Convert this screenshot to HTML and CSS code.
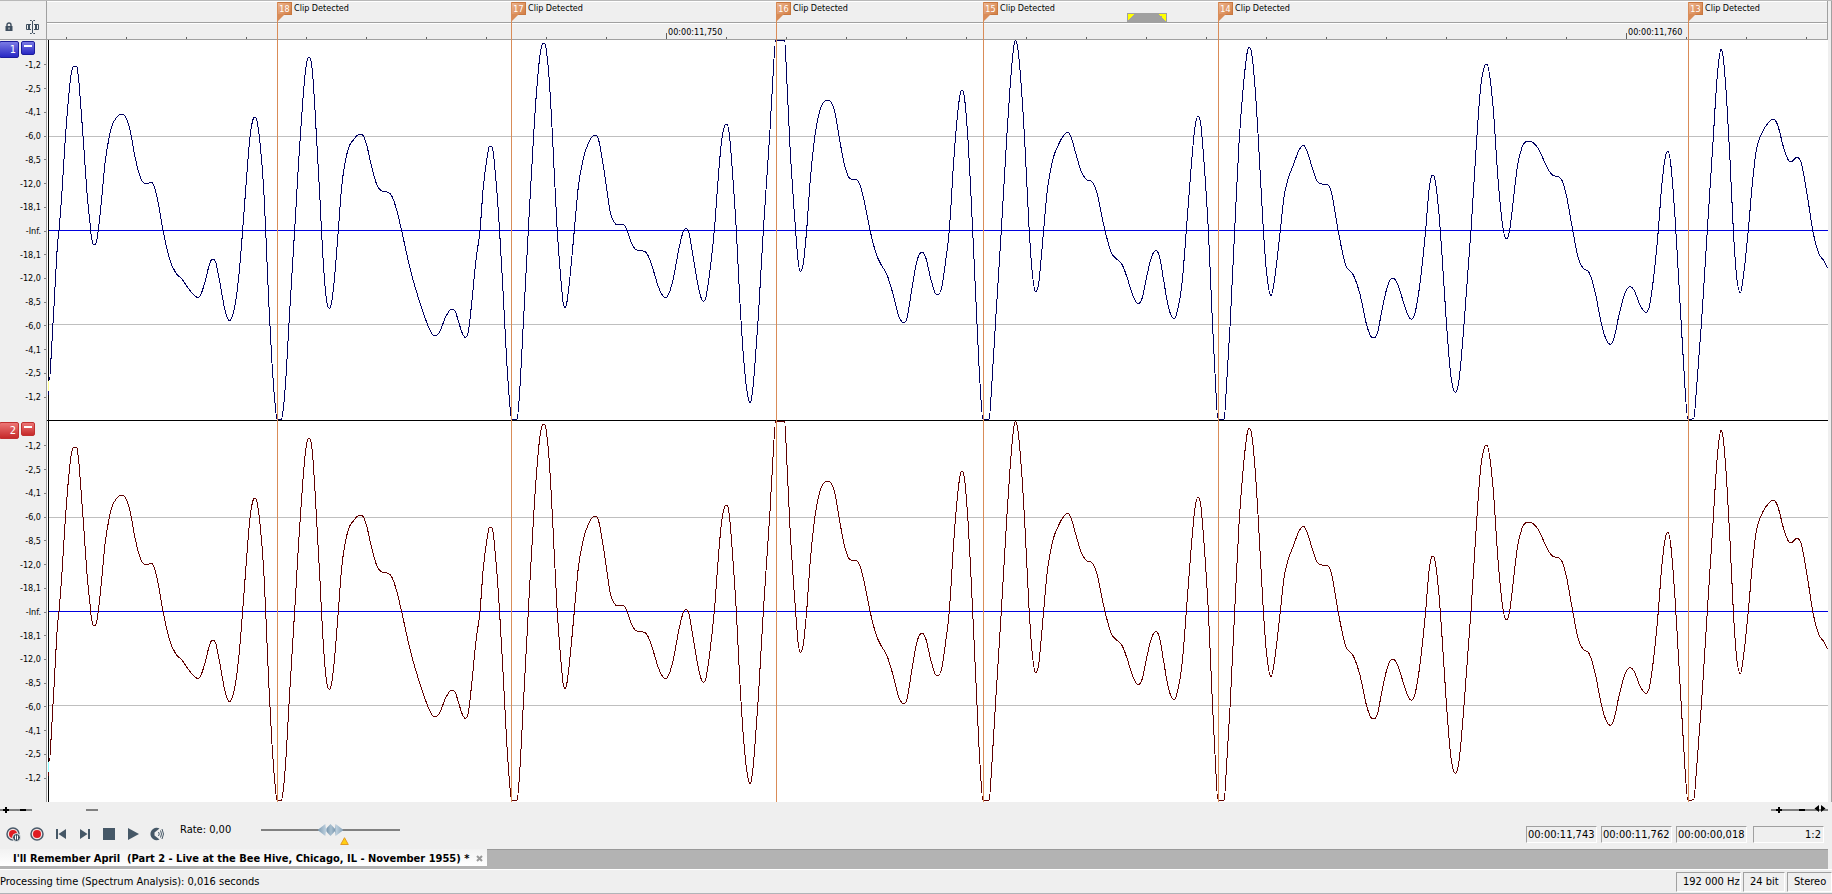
FILE: index.html
```
<!DOCTYPE html>
<html lang="en">
<head>
<meta charset="utf-8">
<title>I'll Remember April</title>
<link rel="stylesheet" href="styles.css">
</head>
<body>

<main class="editor">
	<div class="corner">
		<button class="icon-btn" aria-label="Lock"><svg width="8" height="10" viewBox="0 0 8 10"><path d="M2 5V3a2 2 0 0 1 4 0v2" fill="none" stroke="#3f4f5f" stroke-width="1.4"/><path d="M.5 4h7v5h-7zM3.500 5.500v2h1v-2z" fill="#3f4f5f" fill-rule="evenodd"/></svg></button>
		<button class="icon-btn" aria-label="Snap"><svg width="13" height="14" viewBox="0 0 13 14" fill="none" stroke="#3f4f5f"><path d="M4 .5h1.500l1 1 1-1H9M6.500 1v12M4 13.500h1.500l1-1 1 1H9"/><path d="M5 4.500H.5v5H5M8 4.500h4.500v5H8"/><path d="M3 5v4M10 5v4" stroke-width="2"/></svg></button>
	</div>
	<div class="timeline">
		<div class="lane">
			<div class="region"></div>
		</div>
		<div class="ruler">
			<span class="time t750">00:00:11,750</span>
			<span class="time t760">00:00:11,760</span>
		</div>
	</div>
	<div class="edge"></div>

	<div class="gutter blue">
		<button class="num">1</button><button class="fold" aria-label="Collapse channel 1"></button>
		<div class="scale"><span>-1,2</span><span>-2,5</span><span>-4,1</span><span>-6,0</span><span>-8,5</span><span>-12,0</span><span>-18,1</span><span>-Inf.</span><span>-18,1</span><span>-12,0</span><span>-8,5</span><span>-6,0</span><span>-4,1</span><span>-2,5</span><span>-1,2</span></div>
	</div>
	<svg class="plot first" viewBox="141 120 5343 1140" preserveAspectRatio="none">
		<path class="grid" d="M147 409.500H5484M147 973.500H5484"/>
		<path class="zero" d="M147 691.500H5484"/>
		<path class="axis" d="M145.500 120V1260"/>
		<path class="late" d="M145.500 1143V1173"/>
		<path class="wave wave-l"/>
	</svg>
	<div class="edge"></div>

	<div class="gutter red">
		<button class="num">2</button><button class="fold" aria-label="Collapse channel 2"></button>
		<div class="scale"><span>-1,2</span><span>-2,5</span><span>-4,1</span><span>-6,0</span><span>-8,5</span><span>-12,0</span><span>-18,1</span><span>-Inf.</span><span>-18,1</span><span>-12,0</span><span>-8,5</span><span>-6,0</span><span>-4,1</span><span>-2,5</span><span>-1,2</span></div>
	</div>
	<svg class="plot" viewBox="141 120 5343 1143" preserveAspectRatio="none">
		<path class="grid" d="M147 409.500H5484M147 973.500H5484"/>
		<path class="zero" d="M147 691.500H5484"/>
		<path class="axis" d="M145.500 120V1263"/>
		<path class="late late-r" d="M145.500 1143V1173"/>
		<path class="wave wave-r"/>
	</svg>
	<div class="edge"></div>

	<!-- clip markers, pinned to their time over both channels -->
	<div class="marker m18"><b>18</b><span>Clip Detected</span></div>
	<div class="marker m17"><b>17</b><span>Clip Detected</span></div>
	<div class="marker m16"><b>16</b><span>Clip Detected</span></div>
	<div class="marker m15"><b>15</b><span>Clip Detected</span></div>
	<div class="marker m14"><b>14</b><span>Clip Detected</span></div>
	<div class="marker m13"><b>13</b><span>Clip Detected</span></div>
</main>

<div class="zoombar">
	<svg width="100" height="14" viewBox="0 0 100 14"><path d="M0 7H32M86 7H98" stroke="#808080" stroke-width="2"/><path d="M3 7h6M6 4v6M20 7h6" stroke="#000" stroke-width="2"/></svg>
	<svg width="57" height="14" viewBox="0 0 57 14"><path d="M0 7H57" stroke="#808080" stroke-width="2"/><path d="M5 7h6M8 4v6M28 7h6" stroke="#000" stroke-width="2"/><path d="M48 2v7l-4.500-3.500zM50 2v7l4.500-3.500z"/></svg>
</div>

<div class="transport">
	<div class="buttons">
		<button aria-label="Record paused"><svg width="16" height="16" viewBox="0 0 16 16"><circle cx="8" cy="8" r="6" fill="#f6e4e4" stroke="#4a5b6b" stroke-width="1.500"/><circle cx="8" cy="8" r="4" fill="#e01b22"/><circle cx="11.500" cy="11.500" r="4" fill="#3f5161" stroke="#efefef"/><path d="M10.500 9.500v4M12.500 9.500v4" stroke="#fff"/></svg></button>
		<button aria-label="Record"><svg width="16" height="16" viewBox="0 0 16 16"><circle cx="8" cy="8" r="6" fill="#f6e4e4" stroke="#4a5b6b" stroke-width="1.500"/><circle cx="8" cy="8" r="4" fill="#e01b22"/></svg></button>
		<button aria-label="Go to start"><svg width="16" height="16" viewBox="0 0 16 16" fill="#465867"><path d="M3 3h2v10H3zM13 3v10L5.500 8z"/></svg></button>
		<button aria-label="Go to end"><svg width="16" height="16" viewBox="0 0 16 16" fill="#465867"><path d="M11 3h2v10h-2zM3 3v10l7.500-5z"/></svg></button>
		<button aria-label="Stop"><svg width="16" height="16" viewBox="0 0 16 16"><path d="M2 2h12v12H2z" fill="#465867"/></svg></button>
		<button aria-label="Play"><svg width="16" height="16" viewBox="0 0 16 16"><path d="M3 2v12l11-6z" fill="#465867"/></svg></button>
		<button aria-label="Scrub"><svg width="16" height="16" viewBox="0 0 16 16"><path d="M10.500 2.500A6.200 6.200 0 1 0 10.500 13.500L5.500 9.500v-3z" fill="#465867"/><path d="M9.500 6q1.500 2 0 4M11.500 4.500q2 3.500 0 7M13 3q3 5 0 10" fill="none" stroke="#465867"/></svg></button>
	</div>
	<label class="rate" for="rate">Rate: 0,00</label>
	<div class="slider">
		<input type="range" id="rate" min="-1" max="1" step="0.01" value="0">
		<svg class="mark" width="9" height="8" viewBox="0 0 9 8"><path d="M4.500 .7L8.300 7.500H.7z" fill="#ffce12" stroke="#e39a23"/></svg>
	</div>
	<div class="readouts">
		<output>00:00:11,743</output>
		<output>00:00:11,762</output>
		<output>00:00:00,018</output>
		<output class="ratio">1:2</output>
	</div>
</div>

<div class="tabs">
	<div class="tab"><span>I'll Remember April&nbsp; (Part 2 - Live at the Bee Hive, Chicago, IL - November 1955) *</span><button aria-label="Close"><svg width="7" height="7" viewBox="0 0 7 7"><path d="M1 1l5 5M6 1L1 6" stroke="#999" stroke-width="2"/></svg></button></div>
</div>

<footer class="status">
	<span class="msg">Processing time (Spectrum Analysis): 0,016 seconds</span>
	<span class="cell hz">192 000 Hz</span>
	<span class="cell bits">24 bit</span>
	<span class="cell">Stereo</span>
</footer>

<script src="wave.js"></script>
</body>
</html>
```

FILE: styles.css
```
* {box-sizing: border-box}
body {margin: 0; min-height: 100vh; display: flex; flex-direction: column; background: #efefef; color: #000; font: 11px/14px "DejaVu Sans Condensed", "DejaVu Sans", sans-serif; overflow: hidden}
button {margin: 0; padding: 0; border: 0; background: none; font: inherit}
svg {display: block}

/* editor: gutter | plots | edge */
.editor {position: relative; display: grid; grid-template-columns: 47px 1fr 4px; grid-template-rows: 39px 381px 381px; border-top: 1px solid #b8b8b8}
.corner {display: flex; align-items: flex-end; gap: 13px; padding: 0 0 5px 5px; border-right: 1px solid #a0a0a0; border-bottom: 1px solid #a0a0a0}
.icon-btn {height: 14px; display: flex; align-items: center}
.timeline {display: flex; flex-direction: column; border-right: 1px solid #a0a0a0}
.lane {height: 22px; border-top: 1px solid #fff; border-bottom: 1px solid #a0a0a0; display: flex; align-items: flex-end}
.region {width: 40px; height: 9px; margin-left: 1080px; border: 1px solid #a0a0a0; background: linear-gradient(135deg, #ff0 50%, transparent 50%) left / 7px 7px no-repeat, linear-gradient(225deg, #ff0 50%, transparent 50%) right / 7px 7px no-repeat, #a0a0a0}
.ruler {position: relative; flex: 1; border-top: 1px solid #fff; border-bottom: 1px solid #a0a0a0; background: repeating-linear-gradient(90deg, #606060 0 1px, transparent 1px 60px) 19px 100% / 100% 2px no-repeat}
.time {position: absolute; top: 2px; height: 13px; padding-left: 1px; font-size: 9px; line-height: 12px}
.time::before {content: ""; position: absolute; left: -1px; bottom: 0; width: 1px; height: 6px; background: #606060}
.t750 {left: 620px}
.t760 {left: 1580px}
.edge {border-right: 1px solid #a0a0a0}

.gutter {position: relative; border-right: 1px solid #a0a0a0}
.num, .fold {position: absolute; top: 1px; border: 1px solid #1c1c9c; border-radius: 2px}
.num {left: -1px; width: 20px; height: 17px; padding-right: 2px; color: #fff; text-align: right; line-height: 15px}
.fold {left: 21px; width: 14px; height: 14px}
.fold::before {content: ""; position: absolute; left: 2px; right: 2px; top: 3px; height: 2px; background: #fff}
.blue .num, .blue .fold {background: linear-gradient(#7a7ae4, #2828c4)}
.red .num, .red .fold {background: linear-gradient(#ec7676, #c62a2a); border-color: #c03030}
.scale {height: 356px; margin-top: 13px; display: flex; flex-direction: column; font-size: 9px}
.scale span {flex: 1; display: flex; align-items: center; justify-content: flex-end; gap: 3px}
.scale span::after {content: ""; width: 2px; height: 1px; background: #808080}

.plot {width: 100%; height: 381px; background: #fff}
.plot.first {border-bottom: 1px solid #000}
.plot path {fill: none; vector-effect: non-scaling-stroke; shape-rendering: crispEdges}
.plot .grid {stroke: #bfbfbf}
.plot .zero {stroke: #0000e0}
.plot .axis {stroke: #000}
.plot .late {stroke: #ffff90}
.plot .late-r {stroke: #90ffff}
.plot .wave-l {stroke: #000060}
.plot .wave-r {stroke: #600000}

.marker {position: absolute; top: 1px; bottom: 0; display: flex; align-items: flex-start; gap: 2px; border-left: 1px solid #d98c58; font-size: 9px; line-height: 13px}
.marker::before {content: ""; position: absolute; left: 0; top: 12px; border-right: 7px solid transparent; border-top: 7px solid #d98c58}
.marker b {width: 14px; height: 13px; background: linear-gradient(135deg, #ecb48e, #d47f46); border: 1px solid #c87840; border-left: 0; color: #fff; font-weight: normal; text-align: center; line-height: 12px}
.m18 {left: 277px}
.m17 {left: 511px}
.m16 {left: 776px}
.m15 {left: 983px}
.m14 {left: 1218px}
.m13 {left: 1688px}

.zoombar {display: flex; justify-content: space-between; padding: 1px 4px 0 0}

.transport {display: flex; align-items: flex-start; height: 32px; padding-right: 8px}
.buttons {display: flex; gap: 8px; padding: 9px 0 0 5px}
.rate {margin: 6px 29px 0 15px; width: 52px}
.slider {position: relative; width: 139px; height: 28px}
.slider input {-webkit-appearance: none; appearance: none; display: block; width: 100%; height: 12px; margin: 7px 0 0; background: linear-gradient(#808080, #808080) 0 5px / 100% 2px no-repeat}
.slider input::-webkit-slider-thumb {-webkit-appearance: none; width: 26px; height: 12px; background: linear-gradient(90deg, #7f9cb3, #bdd0de 30%, #7f9cb3 36%, #a9c0d0 50%, #7f9cb3 64%, #bdd0de 70%, #7f9cb3); clip-path: polygon(0 50%, 30% 0, 33% 40%, 50% 0, 67% 40%, 70% 0, 100% 50%, 70% 100%, 67% 60%, 50% 100%, 33% 60%, 30% 100%)}
.mark {position: absolute; left: 79px; top: 20px}
.readouts {display: flex; gap: 4px; margin: 9px 0 0 auto}
.readouts output {width: 71px; height: 17px; padding: 1px 2px 0 1px; border: 1px solid #a0a0a0; border-right-color: #fff; border-bottom-color: #fff; white-space: nowrap}
.readouts .ratio {margin-left: 2px; text-align: right}

.tabs {height: 20px; margin-right: 4px; background: #b3b3b3; border-top: 1px solid #999; display: flex; align-items: flex-start}
.tab {height: 17px; margin-top: -1px; padding: 2px 4px 0 13px; display: flex; align-items: center; gap: 6px; width: 487px; justify-content: space-between; background: linear-gradient(#f2f2f2, #fff); font-weight: bold; white-space: nowrap}

.status {flex: 1; display: flex; align-items: center; gap: 2px; border-top: 1px solid #fff; border-bottom: 1px solid #b0b4b8; min-height: 24px}
.msg {flex: 1}
.cell {height: 20px; width: 45px; padding: 2px 0 0 6px; border: 1px solid #a0a0a0; border-right-color: #fff; border-bottom-color: #fff; white-space: nowrap}
.hz {width: 65px}
.bits {width: 42px}
```

FILE: wave.js
```
// turning points of the signal, x y, three units per pixel
var pts = `148 1140 155 1040 163 900 172 740 177 690 185 590 195 430 205 300 213 225 219 201 225 198 231 202 237 250 244 340 252 450 262 590 270 670 274 710 279 731 283 734 288 729 295 690 305 595 315 490 325 425 335 380 350 352 365 343 376 350 390 390 405 470 418 523 430 548 440 551 455 547 463 560 475 610 489 690 508 775 528 820 545 836 565 865 585 888 593 892 602 885 615 845 630 788 639 777 648 790 660 850 675 930 688 962 698 945 710 885 720 790 728 690 740 530 750 410 758 362 764 351 771 362 780 430 790 550 797 690 806 900 816 1090 826 1220 831 1258 844 1258 850 1225 858 1130 867 970 876 820 884 690 895 500 905 350 915 225 922 180 927 172 933 182 940 250 950 420 960 600 967 740 976 870 983 918 988 925 994 912 1003 840 1015 690 1025 560 1035 490 1047 440 1060 420 1072 406 1080 403 1090 407 1100 435 1115 500 1130 553 1145 573 1160 576 1175 587 1190 630 1206 697 1230 805 1255 893 1282 972 1297 1003 1305 1007 1318 998 1335 955 1350 930 1357 927 1366 935 1377 970
1387 1000 1396 1012 1405 995 1415 910 1428 780 1440 690 1450 560 1460 480 1467 442 1472 438 1478 448 1487 530 1498 680 1510 890 1520 1080 1530 1220 1535 1258 1551 1258 1558 1190 1570 970 1585 690 1600 420 1610 270 1620 165 1627 132 1632 129 1638 145 1647 230 1657 400 1671 680 1682 830 1690 912 1695 922 1701 905 1710 830 1723 690 1735 560 1750 475 1765 430 1778 408 1787 405 1796 420 1808 485 1820 565 1832 642 1842 665 1850 675 1870 674 1880 688 1895 730 1908 749 1925 752 1938 757 1952 785 1975 860 1988 887 1997 893 2007 880 2020 835 2038 740 2050 694 2058 685 2067 700 2080 775 2095 860 2105 898 2111 904 2118 890 2130 810 2143 690 2155 530 2165 420 2174 378 2180 372 2187 395 2197 510 2209 690 2220 910 2232 1090 2242 1180 2250 1208 2257 1180 2265 1090 2275 950 2290 690 2300 540 2310 390 2320 210 2327 121 2354 121 2360 230 2370 440 2386 680 2395 790 2402 814 2410 790 2420 690 2430 550 2442 430 2453 358 2467 312 2477 302 2483 300 2492 304 2503 330 2515 395 2528 470 2540 517 2552 537 2567 537 2580 555 2593 605 2610 690 2628 760 2645 797
2660 822 2680 885 2695 945 2705 965 2712 968 2722 950 2735 870 2748 795 2758 763 2767 757 2777 772 2792 835 2805 878 2814 884 2825 862 2836 790 2848 690 2860 500 2870 370 2880 285 2886 270 2893 290 2904 420 2918 690 2930 950 2940 1150 2949 1258 2967 1258 2975 1160 2987 960 3004 690 3021 400 3031 250 3040 150 3047 121 3054 150 3064 260 3074 420 3087 680 3097 820 3107 876 3116 850 3130 700 3142 570 3158 480 3175 435 3190 408 3202 397 3213 410 3230 470 3245 518 3260 539 3277 546 3290 575 3303 635 3315 692 3335 760 3350 777 3367 795 3382 835 3400 890 3415 911 3427 893 3440 830 3455 770 3468 752 3478 768 3490 835 3505 920 3521 956 3533 930 3547 840 3559 690 3572 520 3585 380 3595 348 3602 370 3613 500 3625 690 3637 960 3645 1120 3654 1258 3672 1258 3680 1150 3690 980 3704 690 3717 430 3730 260 3742 155 3748 141 3755 160 3765 260 3774 400 3790 690 3800 820 3813 887 3822 850 3840 700 3853 585 3865 535 3880 495 3895 455 3910 435 3923 458 3937 505 3952 545 3965 552 3980 552 3995 580 4014 690 4037 795 4060 825
4080 883 4100 975 4112 1008 4120 1014 4132 1000 4145 935 4162 860 4177 834 4192 850 4210 905 4225 948 4235 958 4246 935 4260 850 4277 690 4287 570 4294 530 4299 525 4305 540 4315 620 4325 750 4340 980 4353 1130 4366 1177 4377 1140 4390 1000 4413 690 4430 420 4442 260 4453 200 4460 192 4468 220 4480 330 4495 550 4510 690 4520 716 4529 690 4540 600 4552 500 4565 445 4578 425 4590 424 4605 433 4620 455 4640 500 4658 526 4675 530 4688 545 4700 590 4718 690 4735 775 4748 803 4768 819 4785 875 4805 975 4820 1022 4831 1033 4842 1015 4858 940 4875 880 4890 860 4902 870 4920 915 4937 937 4948 920 4960 840 4975 690 4985 560 4997 465 5004 454 5012 490 5025 650 5035 820 5050 1080 5064 1258 5081 1256 5090 1160 5105 960 5122 690 5140 410 5150 250 5158 170 5163 148 5170 175 5180 300 5190 480 5200 690 5210 830 5221 878 5230 830 5245 690 5258 540 5270 445 5285 400 5305 368 5320 357 5333 375 5350 440 5365 480 5373 485 5391 472 5403 487 5420 575 5440 700 5457 762 5470 780 5484 803`.split(/\s+/).map(Number);

var xs = pts.filter((v, i) => i % 2 == 0);
var ys = pts.filter((v, i) => i % 2 == 1);

// slope at a point, flat on peaks so the curve never overshoots
function slope(i) {
	if (i == 0 || i == xs.length - 1) return 0;
	var a = (ys[i] - ys[i - 1]) / (xs[i] - xs[i - 1]);
	var b = (ys[i + 1] - ys[i]) / (xs[i + 1] - xs[i]);
	if (a * b <= 0) return 0;
	return Math.sign(a) * Math.min(Math.abs(a + b) / 2, 3 * Math.abs(a), 3 * Math.abs(b));
}

var d = 'M' + xs[0] + ' ' + ys[0];
for (var i = 1; i < xs.length; i++) {
	var h = (xs[i] - xs[i - 1]) / 3;
	d += 'C' + [xs[i - 1] + h, ys[i - 1] + h * slope(i - 1), xs[i] - h, ys[i] - h * slope(i), xs[i], ys[i]].join(' ');
}
document.querySelectorAll('.wave').forEach(p => p.setAttribute('d', d + 'M145.5 1173V1185'));
```
